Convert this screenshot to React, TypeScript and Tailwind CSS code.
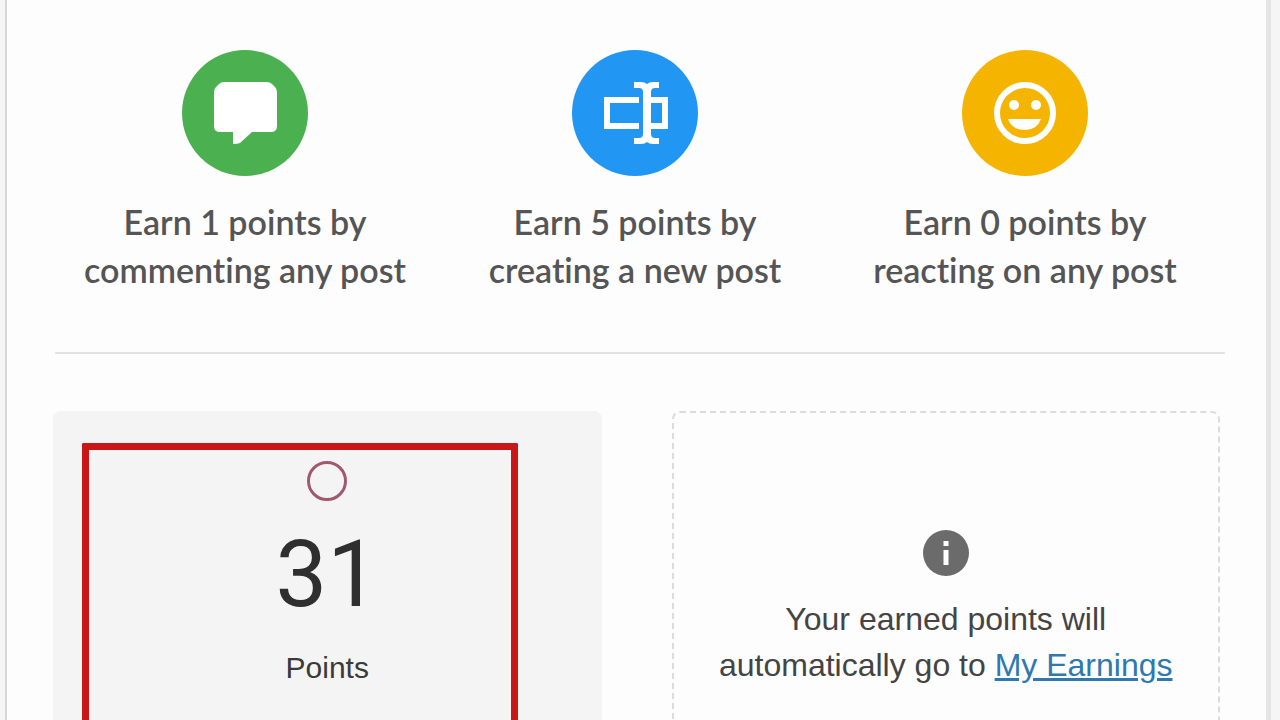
import React from 'react';

interface EarnRuleProps {
  color: string;
  icon: React.ReactNode;
  title: string;
  action: string;
}

const CommentIcon = () => (
  <svg viewBox="0 0 126 126" className="h-full w-full" fill="white" aria-hidden="true">
    <path d="M42 32H85Q88 32 90 34L93 37Q95 39 95 42V76Q95 82 89 82H70L58 93Q56 94 51 94V82H38Q32 82 32 76V42Q32 39 34 37L37 34Q39 32 42 32Z" />
  </svg>
);

const RenameIcon = () => (
  <svg viewBox="0 0 126 126" className="h-full w-full" fill="none" stroke="white" strokeWidth="6" aria-hidden="true">
    <path d="M67 50H35V76H67" />
    <path d="M75 50H93V76H75" />
    <path d="M75 36V90" strokeWidth="8" />
    <path
      d="M62 32H69Q73 32 75 34Q77 32 81 32H87V38H83Q79 38 79 42H71Q71 38 67 38H62ZM62 94H69Q73 94 75 92Q77 94 81 94H87V88H83Q79 88 79 84H71Q71 88 67 88H62Z"
      fill="white"
      stroke="none"
    />
  </svg>
);

const SmileIcon = () => (
  <svg viewBox="0 0 126 126" className="h-full w-full" fill="white" aria-hidden="true">
    <circle cx="63" cy="63" r="28" fill="none" stroke="white" strokeWidth="6" />
    <circle cx="52" cy="55" r="5" />
    <circle cx="74" cy="55" r="5" />
    <path d="M46 69H79Q75 80 63 80Q50 80 46 69Z" />
  </svg>
);

const EarnRule: React.FC<EarnRuleProps> = ({ color, icon, title, action }) => {
  return (
    <div className="flex flex-col items-center text-center">
      <div className={`h-[126px] w-[126px] rounded-full ${color}`}>{icon}</div>
      <p className="mt-[22px] font-[Lato,sans-serif] text-[34px] leading-[48px] font-semibold text-[#555555] [font-variant-ligatures:none]">
        {title}
        <br />
        {action}
      </p>
    </div>
  );
};

export default function App() {
  return (
    <div className="flex min-h-screen bg-[#f5f5f5] pr-[9px] pl-[5px] font-['Liberation_Sans',Arial,sans-serif]">
      <main className="flex flex-1 flex-col border-r-[5px] border-l-2 border-r-[#e5e5e5] border-l-[#d6d6d6] bg-[#fdfdfd]">
        <section className="grid grid-cols-3 pt-[50px] pr-[46px] pl-[43px]">
          <EarnRule color="bg-[#4bb04f]" icon={<CommentIcon />} title="Earn 1 points by" action="commenting any post" />
          <EarnRule color="bg-[#2196f3]" icon={<RenameIcon />} title="Earn 5 points by" action="creating a new post" />
          <EarnRule color="bg-[#f4b400]" icon={<SmileIcon />} title="Earn 0 points by" action="reacting on any post" />
        </section>

        <hr className="mt-[58px] mr-[41px] ml-12 border-t-2 border-[#e3e3e3]" />

        <section className="mt-[57px] grid flex-1 grid-cols-2 gap-[70px] px-[46px]">
          <div className="relative flex flex-col items-center rounded-t-lg bg-[#f4f4f4] pt-[50px]">
            <div className="absolute top-8 right-[84px] bottom-0 left-[29px] rounded-t-xs border-x-[7px] border-t-[7px] border-[#c91717]" />
            <span className="h-10 w-10 rounded-full border-[3px] border-[#a05a70]" />
            <strong className="mt-7 font-[Roboto,sans-serif] text-[92px] leading-[92px] font-normal text-[#2f2f2f]">31</strong>
            <span className="mt-[27px] text-[30px] leading-10 text-[#3a3a3a]">Points</span>
          </div>

          <div className="flex flex-col items-center rounded-t-lg border-2 border-b-0 border-dashed border-[#dcdcdc] pt-[117px] text-center">
            <svg viewBox="0 0 46 46" className="h-[46px] w-[46px]" aria-hidden="true">
              <circle cx="23" cy="23" r="23" fill="#6b6b6b" />
              <path d="M20.500 11H25.500V16H20.500ZM20.500 20H25.500V35H20.500Z" fill="white" />
            </svg>
            <p className="mt-5 text-[32px] leading-[46px] text-[#444444]">
              Your earned points will
              <br />
              automatically go to{' '}
              <a href="#earnings" className="text-[#2f78b0] underline">
                My Earnings
              </a>
            </p>
          </div>
        </section>
      </main>
    </div>
  );
}
